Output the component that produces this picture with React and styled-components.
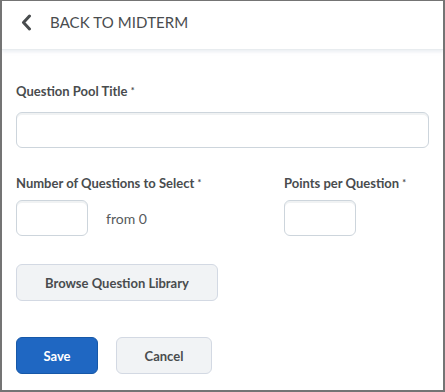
import React from 'react'
import styled, { createGlobalStyle } from 'styled-components'

const Global = createGlobalStyle`
  html, body { margin: 0; padding: 0; background: #fff; }
  body { font-family: Lato, "Open Sans", sans-serif; color: #494c4e; }
`

const Frame = styled.div`
  box-sizing: border-box;
  width: 445px;
  height: 392px;
  border: 2px solid #747474;
  border-top-width: 1px;
  display: flex;
  flex-direction: column;
  overflow: hidden;
`

const Header = styled.header`
  height: 49px;
  flex-shrink: 0;
  box-sizing: border-box;
  display: flex;
  align-items: flex-start;
  padding: 13px 0 0 18px;
  gap: 18px;
  border-bottom: 1px solid #e8ecef;
  box-shadow: 0 2px 3px rgba(200, 210, 220, 0.35);
  position: relative;
  z-index: 1;
`

const BackText = styled.span`
  font-size: 15px;
  line-height: 16px;
  font-weight: 400;
  letter-spacing: 0.1px;
  color: #494c4e;
  text-transform: uppercase;
`

const Body = styled.main`
  padding: 33px 14px 0 14px;
  display: flex;
  flex-direction: column;
`

const Label = styled.label`
  display: block;
  font-size: 13px;
  font-weight: 700;
  line-height: 16px;
  color: #494c4e;
  margin-bottom: ${p => p.$gap}px;
  .req { font-size: 9px; vertical-align: top; }
`

const Input = styled.input`
  box-sizing: border-box;
  width: ${p => p.$w || '100%'};
  height: 36px;
  border: 1px solid #cdd5dc;
  border-radius: 6px;
  background: #fff;
  box-shadow: inset 0 2px 0 0 rgba(181, 189, 194, 0.2);
  outline: none;
  font: inherit;
  padding: 0 10px;
`

const Row = styled.div`
  display: flex;
  margin-top: 27px;
`

const Field = styled.div`
  display: flex;
  flex-direction: column;
  width: ${p => p.$w}px;
`

const InlineGroup = styled.div`
  display: flex;
  align-items: center;
  gap: 18px;
`

const FromText = styled.span`
  font-size: 14px;
  color: #565a5c;
`

const Button = styled.button`
  box-sizing: border-box;
  height: 37px;
  width: ${p => p.$w}px;
  border-radius: 6px;
  border: 1px solid ${p => (p.$primary ? '#1658a8' : '#d3d9e3')};
  background: ${p => (p.$primary ? '#1f67c2' : '#f1f3f5')};
  color: ${p => (p.$primary ? '#fff' : '#494c4e')};
  font-family: Lato, "Open Sans", sans-serif;
  font-size: 13px;
  font-weight: 700;
  cursor: pointer;
  padding: 0;
`

const BrowseWrap = styled.div`
  margin-top: 28px;
`

const Actions = styled.div`
  display: flex;
  gap: 18px;
  margin-top: 36px;
`

const Chevron = () => (
  <svg width="12" height="17" viewBox="0 0 12 17">
    <path d="M9.5 2 L3.5 8.5 L9.5 15" fill="none" stroke="#494c4e" strokeWidth="3" strokeLinecap="round" strokeLinejoin="round" />
  </svg>
)

export default function App() {
  return (
    <>
      <Global />
      <Frame>
        <Header>
          <Chevron />
          <BackText>Back to Midterm</BackText>
        </Header>
        <Body>
          <Label $gap={13}>Question Pool Title <span className="req">*</span></Label>
          <Input />
          <Row>
            <Field $w={268}>
              <Label $gap={9}>Number of Questions to Select <span className="req">*</span></Label>
              <InlineGroup>
                <Input $w="72px" />
                <FromText>from 0</FromText>
              </InlineGroup>
            </Field>
            <Field $w={140}>
              <Label $gap={9}>Points per Question <span className="req">*</span></Label>
              <Input $w="72px" />
            </Field>
          </Row>
          <BrowseWrap>
            <Button $w={202}>Browse Question Library</Button>
          </BrowseWrap>
          <Actions>
            <Button $primary $w={82}>Save</Button>
            <Button $w={96}>Cancel</Button>
          </Actions>
        </Body>
      </Frame>
    </>
  )
}
